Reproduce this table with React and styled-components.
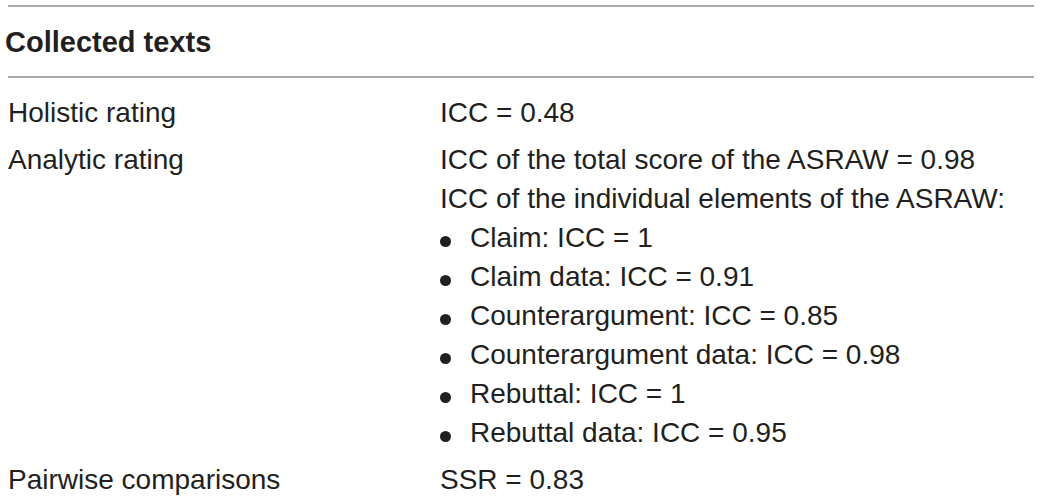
import React from "react";
import styled, { createGlobalStyle } from "styled-components";

const GlobalStyle = createGlobalStyle`
    html, body {
        margin: 0;
        padding: 0;
        background: #ffffff;
    }
    body {
        font-family: "Liberation Sans", Arial, sans-serif;
        color: #231f20;
    }
`;

const Table = styled.div`
    width: 1026px;
    margin-left: 8px;
    padding-top: 5px;
`;

const HeaderRow = styled.div`
    border-top: 2px solid #a9a9a9;
    border-bottom: 2px solid #a9a9a9;
    height: 69px;
`;

const HeaderCell = styled.div`
    font-size: 29px;
    font-weight: 700;
    line-height: 37px;
    margin-left: -3px;
    padding-top: 17px;
`;

const Body = styled.div`
    padding-top: 15px;
`;

const Row = styled.div`
    display: grid;
    grid-template-columns: 432px 1fr;
    font-size: 28px;
    line-height: 39px;
    padding-bottom: 8px;
`;

const Label = styled.div``;

const Value = styled.div``;

const BulletList = styled.ul`
    list-style: none;
    margin: 0;
    padding: 0;
`;

const Bullet = styled.li`
    &::before {
        content: "";
        display: inline-block;
        width: 11px;
        height: 11px;
        border-radius: 50%;
        background: #231f20;
        margin-right: 19px;
        vertical-align: baseline;
    }
`;

const elements = [
    "Claim: ICC = 1",
    "Claim data: ICC = 0.91",
    "Counterargument: ICC = 0.85",
    "Counterargument data: ICC = 0.98",
    "Rebuttal: ICC = 1",
    "Rebuttal data: ICC = 0.95",
];

export default function App() {
    return <>
        <GlobalStyle />
        <Table>
            <HeaderRow>
                <HeaderCell>Collected texts</HeaderCell>
            </HeaderRow>
            <Body>
                <Row>
                    <Label>Holistic rating</Label>
                    <Value>ICC = 0.48</Value>
                </Row>
                <Row>
                    <Label>Analytic rating</Label>
                    <Value>
                        <div>ICC of the total score of the ASRAW = 0.98</div>
                        <div>ICC of the individual elements of the ASRAW:</div>
                        <BulletList>
                            {elements.map((e) => <Bullet key={e}>{e}</Bullet>)}
                        </BulletList>
                    </Value>
                </Row>
                <Row>
                    <Label>Pairwise comparisons</Label>
                    <Value>SSR = 0.83</Value>
                </Row>
            </Body>
        </Table>
    </>
}
